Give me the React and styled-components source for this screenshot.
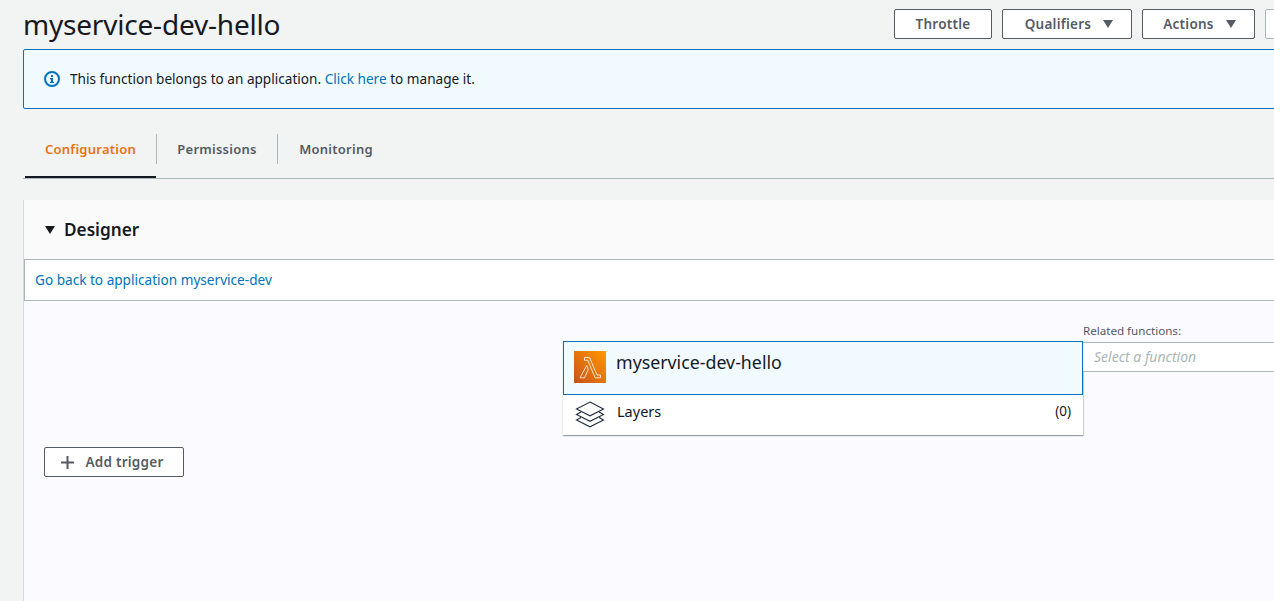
import React from "react"
import styled, { createGlobalStyle } from "styled-components"

const GlobalStyle = createGlobalStyle`
  html, body {
    margin: 0;
    height: 100%;
    overflow: hidden;
    background: #f2f3f3;
  }
  body {
    font-family: "Noto Sans", "Open Sans", sans-serif;
    color: #16191f;
  }
`

const Page = styled.div`
  width: 1274px;
  height: 601px;
  overflow: hidden;
  padding-left: 23px;
  box-sizing: border-box;
`

const Header = styled.div`
  display: flex;
  justify-content: space-between;
  align-items: flex-start;
  height: 49px;
  padding-top: 9px;
  box-sizing: border-box;
  width: 1302px;
`

const Title = styled.h1`
  margin: -2px 0 0;
  font-size: 28px;
  line-height: 34px;
  font-weight: 400;
  letter-spacing: -0.2px;
`

const Actions = styled.div`
  display: flex;
  gap: 10px;
`

const Button = styled.button`
  display: flex;
  align-items: center;
  justify-content: center;
  gap: ${(p) => p.$gap || 0}px;
  width: ${(p) => p.$width}px;
  height: 30px;
  padding: 0 ${(p) => p.$end || 0}px 0 ${(p) => p.$shift || 0}px;
  box-sizing: border-box;
  background: #fff;
  border: 1px solid ${(p) => (p.$muted ? "#aab7b8" : "#545b64")};
  border-radius: 2px;
  color: #545b64;
  font-family: inherit;
  font-size: 13.5px;
  font-weight: 600;
  letter-spacing: 0.25px;
`

const Caret = styled.span`
  width: 0;
  height: 0;
  border-left: 5.5px solid transparent;
  border-right: 5.5px solid transparent;
  border-top: 8px solid ${(p) => p.$color || "#545b64"};
`

const Banner = styled.div`
  display: flex;
  align-items: center;
  gap: 10px;
  width: 1300px;
  height: 60px;
  padding-left: 20px;
  box-sizing: border-box;
  background: #f1faff;
  border: 1px solid #0073bb;
  border-radius: 2px;
  font-size: 13.6px;

  span {
    margin-top: -1px;
  }
`

const Link = styled.a`
  color: #0073bb;
  text-decoration: none;
`

const Tabs = styled.div`
  display: flex;
  width: 1251px;
  height: 45px;
  margin-top: 25px;
  box-sizing: border-box;
  border-bottom: 1px solid #aab7b8;
`

const Tab = styled.div`
  position: relative;
  display: flex;
  align-items: center;
  justify-content: center;
  align-self: flex-start;
  width: ${(p) => p.$width}px;
  height: 30px;
  margin-left: ${(p) => (p.$first ? 2 : 0)}px;
  box-sizing: border-box;
  font-size: 13px;
  font-weight: 600;
  letter-spacing: 0.25px;
  color: ${(p) => (p.$active ? "#ec7211" : "#545b64")};
  border-right: ${(p) => (p.$divider ? "1px solid #aab7b8" : "none")};

  &::after {
    content: "";
    display: ${(p) => (p.$active ? "block" : "none")};
    position: absolute;
    left: 0;
    right: 0;
    bottom: -14px;
    height: 2px;
    background: #16191f;
  }
`

const Panel = styled.section`
  width: 1300px;
  height: 420px;
  margin-top: 21px;
  background: #fafafa;
  border-left: 1px solid #d5dbdb;
  box-sizing: border-box;
`

const PanelHead = styled.div`
  display: flex;
  align-items: center;
  gap: 9px;
  height: 59px;
  padding-left: 21px;
  box-sizing: border-box;
  font-size: 17.2px;
  font-weight: 600;
`

const BackBar = styled.div`
  display: flex;
  align-items: center;
  height: 42px;
  padding: 0 0 1px 10px;
  box-sizing: border-box;
  background: #fff;
  border-top: 1px solid #aab7b8;
  border-bottom: 1px solid #aab7b8;
  border-left: 1px solid #aab7b8;
  font-size: 13.6px;
`

const Canvas = styled.div`
  display: flex;
  align-items: flex-start;
  height: 300px;
  background: #fbfaff;
  padding-top: 40px;
  box-sizing: border-box;
`

const TriggerCol = styled.div`
  width: 539px;
  padding: 106px 0 0 20px;
  box-sizing: border-box;
`

const FunctionCard = styled.div`
  width: 520px;
  background: #fff;
  box-shadow: 0 1px 1px 0 rgba(0, 28, 36, 0.3), 1px 1px 1px 0 rgba(0, 28, 36, 0.15);
`

const FunctionRow = styled.div`
  display: flex;
  gap: 10px;
  height: 54px;
  padding: 9px 0 0 10px;
  box-sizing: border-box;
  background: #f1faff;
  border: 1px solid #0073bb;
  font-size: 17.8px;
  line-height: 22px;
`

const LayersRow = styled.div`
  display: flex;
  align-items: flex-start;
  gap: 12px;
  height: 40px;
  padding: 6px 12px 0 12px;
  box-sizing: border-box;
  font-size: 14.5px;
  line-height: 20px;

  span:last-child {
    margin-left: auto;
    font-size: 13.5px;
  }
`

const Related = styled.div`
  width: 200px;
`

const RelatedLabel = styled.div`
  height: 17px;
  margin-top: -18px;
  margin-bottom: 2px;
  font-size: 11.6px;
  line-height: 16px;
  color: #545b64;
`

const Select = styled.div`
  display: flex;
  align-items: center;
  height: 30px;
  padding: 0 0 1px 11px;
  box-sizing: border-box;
  background: #fff;
  border-top: 1px solid #aab7b8;
  border-bottom: 1px solid #aab7b8;
  font-size: 14px;
  font-style: italic;
  color: #aab7b8;
`

const InfoIcon = () => (
  <svg width="16" height="16" viewBox="0 0 16 16" fill="none">
    <circle cx="8" cy="8" r="7" stroke="#0073bb" strokeWidth="2" />
    <rect x="7" y="7" width="2" height="5" fill="#0073bb" />
    <rect x="6" y="7" width="2" height="1.4" fill="#0073bb" />
    <rect x="6" y="10.8" width="4" height="1.3" fill="#0073bb" />
    <rect x="7" y="4" width="2" height="2" fill="#0073bb" />
  </svg>
)

const LambdaIcon = () => (
  <svg width="32" height="32" viewBox="0 0 32 32">
    <defs>
      <linearGradient id="lambdaBg" x1="0" y1="1" x2="1" y2="0">
        <stop offset="0" stopColor="#c8511b" />
        <stop offset="1" stopColor="#ff9900" />
      </linearGradient>
    </defs>
    <rect width="32" height="32" fill="url(#lambdaBg)" />
    <path
      d="M10.5 6.5h5l7.5 17.5h3.5v2.8h-5.4L13.7 9.3h-3.2zM12.6 14.6l1.7 3.6-3.7 8.6H6z"
      fill="none"
      stroke="#fff"
      strokeWidth="0.8"
      strokeLinejoin="round"
    />
  </svg>
)

const LayersIcon = () => (
  <svg width="30" height="28" viewBox="0 0 30 28" fill="none" stroke="#232f3e" strokeWidth="1.1">
    <path d="M15 1l13.5 6.9L15 14.8 1.5 7.9z" />
    <path d="M6 11l-4.5 2.4L15 20.3l13.5-6.9L24 11" />
    <path d="M6 16.5l-4.5 2.4L15 25.8l13.5-6.9L24 16.5" />
  </svg>
)

const PlusIcon = () => (
  <svg width="15" height="15" viewBox="0 0 15 15">
    <path d="M7.5 1v13M1 7.5h13" stroke="#545b64" strokeWidth="2" />
  </svg>
)

const App = () => (
  <>
    <GlobalStyle />
    <Page>
      <Header>
        <Title>myservice-dev-hello</Title>
        <Actions>
          <Button $width={98}>Throttle</Button>
          <Button $width={130} $gap={12} $shift={4}>
            Qualifiers <Caret />
          </Button>
          <Button $width={113} $gap={12} $shift={2}>
            Actions <Caret />
          </Button>
          <Button $width={60} $muted />
        </Actions>
      </Header>
      <Banner>
        <InfoIcon />
        <span>
          This function belongs to an application. <Link href="#">Click here</Link> to manage it.
        </span>
      </Banner>
      <Tabs>
        <Tab $first $active $divider $width={132}>Configuration</Tab>
        <Tab $divider $width={121}>Permissions</Tab>
        <Tab $width={116}>Monitoring</Tab>
      </Tabs>
      <Panel>
        <PanelHead>
          <Caret $color="#16191f" />
          Designer
        </PanelHead>
        <BackBar>
          <Link href="#">Go back to application myservice-dev</Link>
        </BackBar>
        <Canvas>
          <TriggerCol>
            <Button $width={140} $gap={10} $end={4}>
              <PlusIcon /> Add trigger
            </Button>
          </TriggerCol>
          <FunctionCard>
            <FunctionRow>
              <LambdaIcon />
              myservice-dev-hello
            </FunctionRow>
            <LayersRow>
              <LayersIcon />
              <span>Layers</span>
              <span>(0)</span>
            </LayersRow>
          </FunctionCard>
          <Related>
            <RelatedLabel>Related functions:</RelatedLabel>
            <Select>Select a function</Select>
          </Related>
        </Canvas>
      </Panel>
    </Page>
  </>
)

export default App
